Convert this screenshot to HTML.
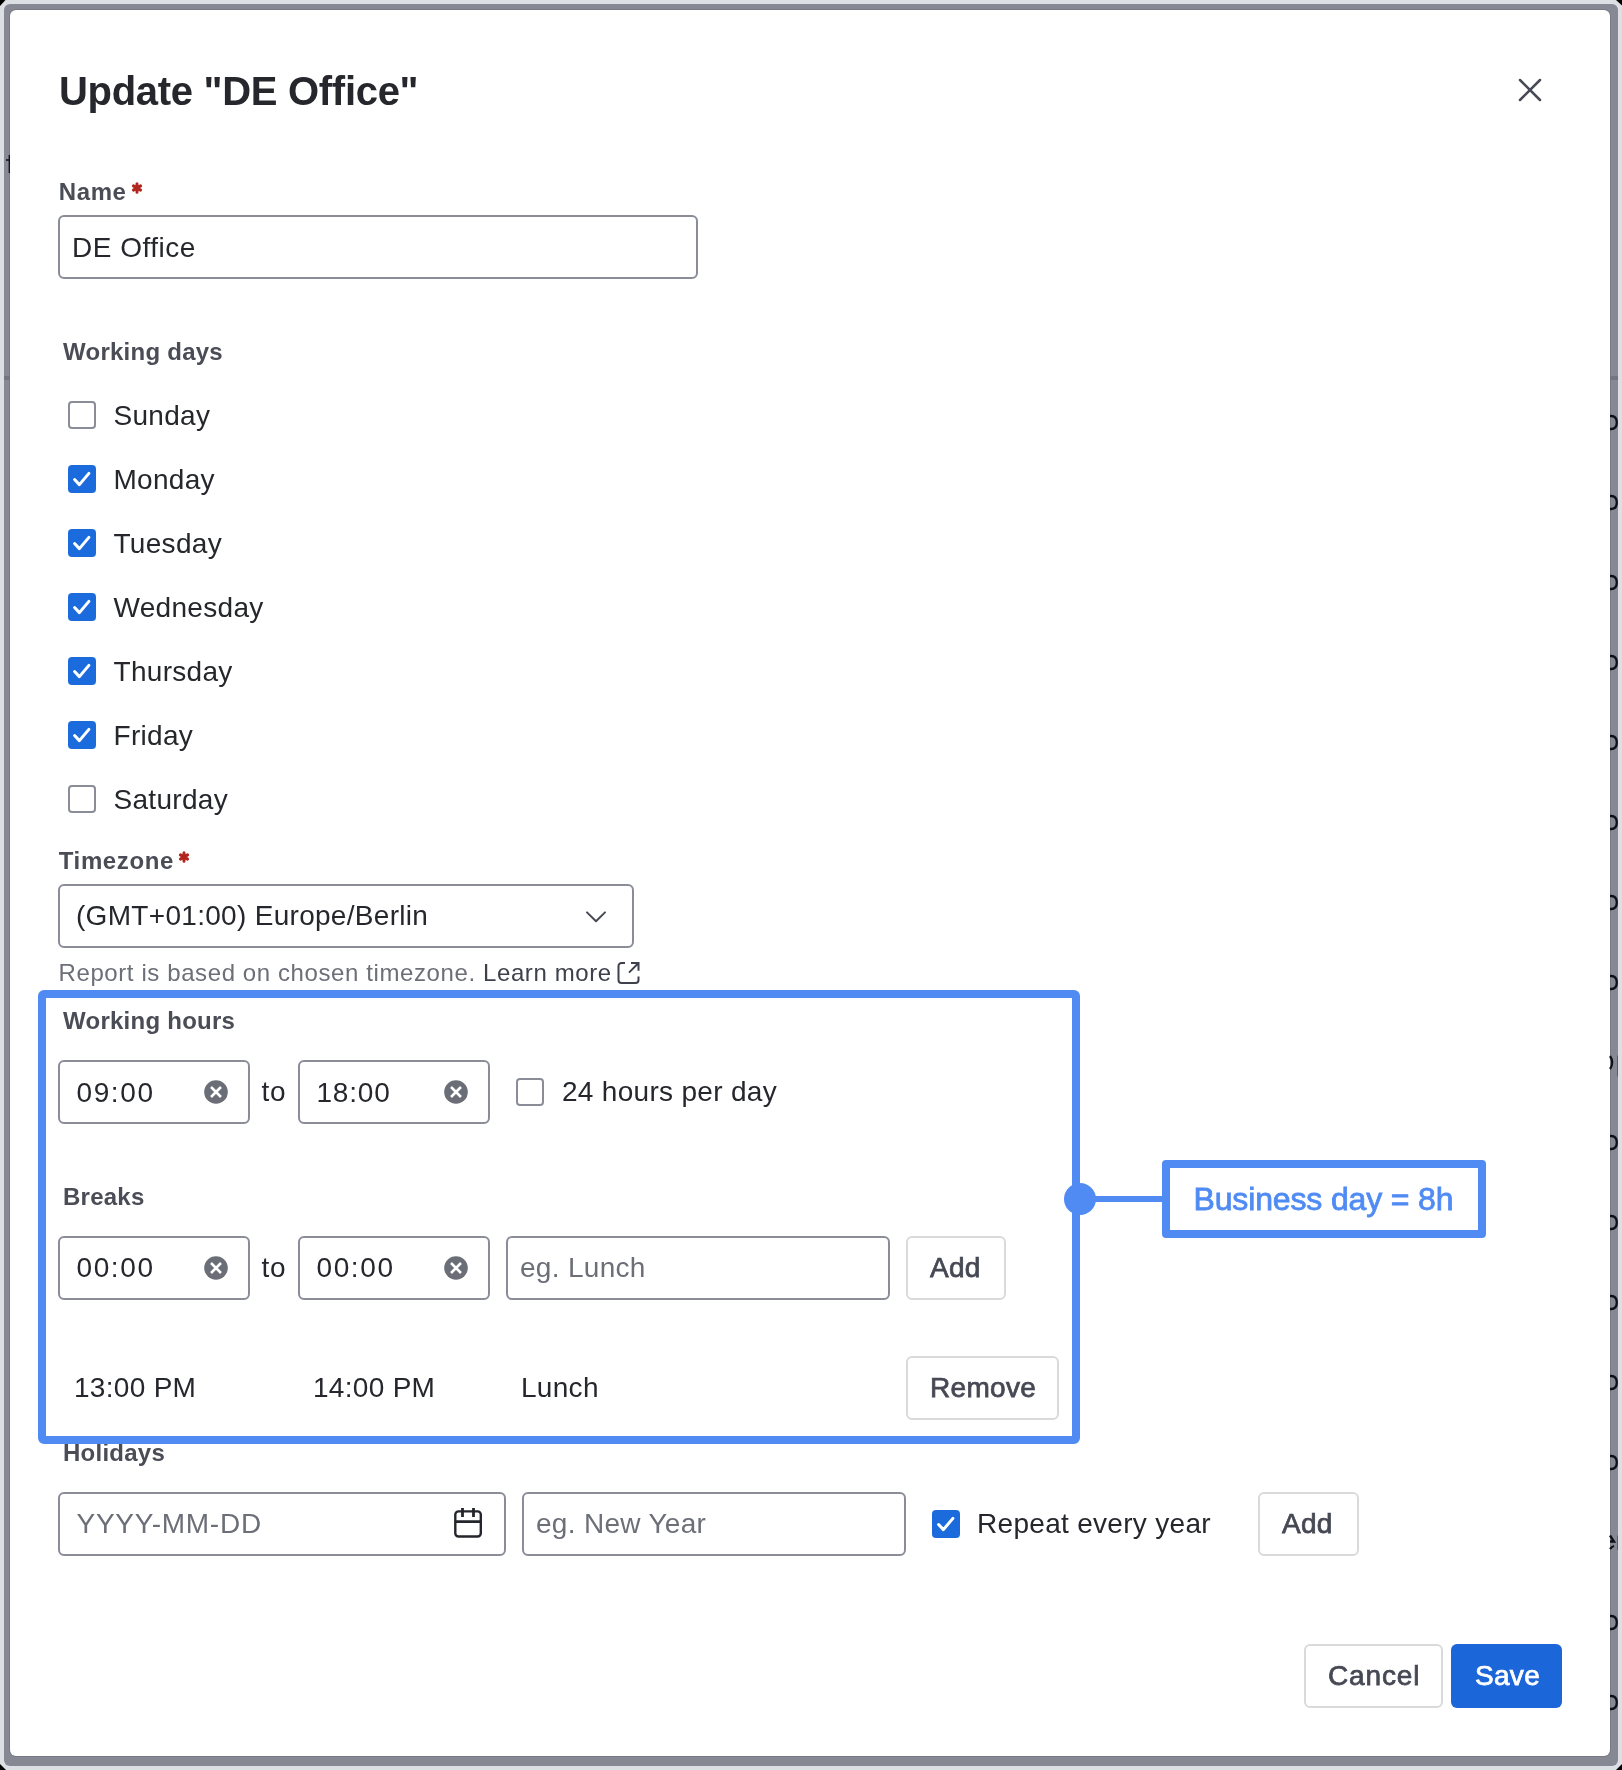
<!DOCTYPE html>
<html><head><meta charset="utf-8">
<style>
html,body{margin:0;padding:0;width:1622px;height:1770px;overflow:hidden;background:#000;}
body{font-family:"Liberation Sans",sans-serif;position:relative;will-change:transform;}
.a{position:absolute;}
.t{position:absolute;line-height:1;white-space:nowrap;}
#bg{left:0;top:0;width:1622px;height:1770px;background:#dcdfe4;clip-path:polygon(5.5px 0,1616px 0,1622px 5.5px,1622px 1764px,1616px 1770px,6px 1770px,0 1764px,0 6px);}
#band{left:4px;top:4px;width:1614px;height:1762px;background:#868993;border-radius:6px;}
#modal{left:10px;top:10px;width:1600px;height:1746px;background:#fff;border-radius:6px;overflow:hidden;box-shadow:0 0 0 1px #777a84;}
.lbl{font-size:24px;font-weight:bold;color:#4a4d56;letter-spacing:0.25px;}
.req{color:#b3261e;}
.txt{font-size:28px;color:#25272c;letter-spacing:0.3px;}
.ph{font-size:28px;color:#6c6f78;letter-spacing:0.3px;}
.box{position:absolute;box-sizing:border-box;border:2px solid #8a8d97;border-radius:6px;background:#fff;}
.btn{position:absolute;box-sizing:border-box;border:2px solid #dadada;border-radius:6px;background:#fff;}
.cb{position:absolute;box-sizing:border-box;width:28px;height:28px;border:2px solid #8a8d97;border-radius:4px;background:#fff;}
.cbc{position:absolute;width:28px;height:28px;border-radius:4px;background:#1b6bdd;}
.bt{font-size:28px;color:#464954;-webkit-text-stroke:0.75px #464954;letter-spacing:0.3px;}
</style></head><body>
<div id="bg" class="a"></div>
<div id="band" class="a"></div>
<div id="modal" class="a"></div>
<svg class="a" style="left:0;top:0" width="1622" height="1770" viewBox="0 0 1622 1770"><path d="M1610 416.0 H1611 Q1616.8 416.0 1616.8 422.5 Q1616.8 429.0 1611 429.0 H1610" fill="none" stroke="#0d0f18" stroke-width="2.3"/><path d="M1610 496.0 H1611 Q1616.8 496.0 1616.8 502.5 Q1616.8 509.0 1611 509.0 H1610" fill="none" stroke="#0d0f18" stroke-width="2.3"/><path d="M1610 576.0 H1611 Q1616.8 576.0 1616.8 582.5 Q1616.8 589.0 1611 589.0 H1610" fill="none" stroke="#0d0f18" stroke-width="2.3"/><path d="M1610 656.0 H1611 Q1616.8 656.0 1616.8 662.5 Q1616.8 669.0 1611 669.0 H1610" fill="none" stroke="#0d0f18" stroke-width="2.3"/><path d="M1610 736.0 H1611 Q1616.8 736.0 1616.8 742.5 Q1616.8 749.0 1611 749.0 H1610" fill="none" stroke="#0d0f18" stroke-width="2.3"/><path d="M1610 816.0 H1611 Q1616.8 816.0 1616.8 822.5 Q1616.8 829.0 1611 829.0 H1610" fill="none" stroke="#0d0f18" stroke-width="2.3"/><path d="M1610 896.0 H1611 Q1616.8 896.0 1616.8 902.5 Q1616.8 909.0 1611 909.0 H1610" fill="none" stroke="#0d0f18" stroke-width="2.3"/><path d="M1610 976.0 H1611 Q1616.8 976.0 1616.8 982.5 Q1616.8 989.0 1611 989.0 H1610" fill="none" stroke="#0d0f18" stroke-width="2.3"/><path d="M1610 1056.0 Q1614.5 1062.5 1610 1069.0" fill="none" stroke="#0d0f18" stroke-width="2.2"/><path d="M1617.5 1055.5 V1076.5" stroke="#5a5d68" stroke-width="1"/><path d="M1610 1136.0 H1611 Q1616.8 1136.0 1616.8 1142.5 Q1616.8 1149.0 1611 1149.0 H1610" fill="none" stroke="#0d0f18" stroke-width="2.3"/><path d="M1610 1216.0 H1611 Q1616.8 1216.0 1616.8 1222.5 Q1616.8 1229.0 1611 1229.0 H1610" fill="none" stroke="#0d0f18" stroke-width="2.3"/><path d="M1610 1296.0 H1611 Q1616.8 1296.0 1616.8 1302.5 Q1616.8 1309.0 1611 1309.0 H1610" fill="none" stroke="#0d0f18" stroke-width="2.3"/><path d="M1610 1376.0 H1611 Q1616.8 1376.0 1616.8 1382.5 Q1616.8 1389.0 1611 1389.0 H1610" fill="none" stroke="#0d0f18" stroke-width="2.3"/><path d="M1610 1456.0 H1611 Q1616.8 1456.0 1616.8 1462.5 Q1616.8 1469.0 1611 1469.0 H1610" fill="none" stroke="#0d0f18" stroke-width="2.3"/><path d="M1610 1535.5 L1614 1541.5 H1610 M1610 1549.0 Q1612 1546.5 1614 1546.0" fill="none" stroke="#0d0f18" stroke-width="2.3"/><path d="M1617.5 1535.5 V1550.0" stroke="#5a5d68" stroke-width="1"/><path d="M1610 1616.0 H1611 Q1616.8 1616.0 1616.8 1622.5 Q1616.8 1629.0 1611 1629.0 H1610" fill="none" stroke="#0d0f18" stroke-width="2.3"/><path d="M1610 1696.0 H1611 Q1616.8 1696.0 1616.8 1702.5 Q1616.8 1709.0 1611 1709.0 H1610" fill="none" stroke="#0d0f18" stroke-width="2.3"/><path d="M9.3 155V173M6 160H9.3" fill="none" stroke="#0d0f18" stroke-width="1.3"/><rect x="4" y="376" width="6" height="4" fill="#737681"/><rect x="1610" y="376" width="8" height="4" fill="#737681"/></svg>

<!-- title -->
<div class="t" style="left:59px;top:71.2px;font-size:40px;font-weight:bold;color:#25272c;letter-spacing:-0.3px;">Update "DE Office"</div>
<svg class="a" style="left:1510px;top:70px" width="40" height="40" viewBox="0 0 40 40"><path d="M10 10L30 30M30 10L10 30" stroke="#474a54" stroke-width="2.5" stroke-linecap="round"/></svg>

<!-- name -->
<div class="t lbl" style="left:58.8px;top:179.9px;letter-spacing:0.6px;">Name</div>
<svg class="a" style="left:131px;top:182px" width="12" height="12" viewBox="0 0 12 12"><path d="M6 1.8V10.2M2.4 3.9L9.6 8.1M9.6 3.9L2.4 8.1" stroke="#b3261e" stroke-width="3" stroke-linecap="round"/></svg>
<div class="box" style="left:58px;top:215px;width:640px;height:64px;"></div>
<div class="t txt" style="left:72px;top:233.6px;letter-spacing:0.5px;">DE Office</div>

<!-- working days -->
<div class="t lbl" style="left:63px;top:340px;">Working days</div>
<div class="cb" style="left:68px;top:401px;"></div>
<div class="t txt" style="left:113.5px;top:401.5px;">Sunday</div>
<div class="cbc" style="left:68px;top:465px;"><svg width="28" height="28" viewBox="0 0 28 28"><path d="M6.6 14.5L11.4 19.6L20.9 8.4" fill="none" stroke="#fff" stroke-width="3" stroke-linecap="round" stroke-linejoin="round"/></svg></div>
<div class="t txt" style="left:113.5px;top:465.5px;">Monday</div>
<div class="cbc" style="left:68px;top:529px;"><svg width="28" height="28" viewBox="0 0 28 28"><path d="M6.6 14.5L11.4 19.6L20.9 8.4" fill="none" stroke="#fff" stroke-width="3" stroke-linecap="round" stroke-linejoin="round"/></svg></div>
<div class="t txt" style="left:113.5px;top:529.5px;">Tuesday</div>
<div class="cbc" style="left:68px;top:593px;"><svg width="28" height="28" viewBox="0 0 28 28"><path d="M6.6 14.5L11.4 19.6L20.9 8.4" fill="none" stroke="#fff" stroke-width="3" stroke-linecap="round" stroke-linejoin="round"/></svg></div>
<div class="t txt" style="left:113.5px;top:593.5px;">Wednesday</div>
<div class="cbc" style="left:68px;top:657px;"><svg width="28" height="28" viewBox="0 0 28 28"><path d="M6.6 14.5L11.4 19.6L20.9 8.4" fill="none" stroke="#fff" stroke-width="3" stroke-linecap="round" stroke-linejoin="round"/></svg></div>
<div class="t txt" style="left:113.5px;top:657.5px;">Thursday</div>
<div class="cbc" style="left:68px;top:721px;"><svg width="28" height="28" viewBox="0 0 28 28"><path d="M6.6 14.5L11.4 19.6L20.9 8.4" fill="none" stroke="#fff" stroke-width="3" stroke-linecap="round" stroke-linejoin="round"/></svg></div>
<div class="t txt" style="left:113.5px;top:721.5px;">Friday</div>
<div class="cb" style="left:68px;top:785px;"></div>
<div class="t txt" style="left:113.5px;top:785.5px;">Saturday</div>

<!-- timezone -->
<div class="t lbl" style="left:58.8px;top:849px;letter-spacing:0.6px;">Timezone</div>
<svg class="a" style="left:177.5px;top:851px" width="12" height="12" viewBox="0 0 12 12"><path d="M6 1.8V10.2M2.4 3.9L9.6 8.1M9.6 3.9L2.4 8.1" stroke="#b3261e" stroke-width="3" stroke-linecap="round"/></svg>
<div class="box" style="left:58px;top:884px;width:576px;height:64px;"></div>
<div class="t txt" style="left:76px;top:901.7px;">(GMT+01:00) Europe/Berlin</div>
<svg class="a" style="left:584px;top:904px" width="24" height="24" viewBox="0 0 24 24"><path d="M3 8.4L12 17.2L21 8.4" fill="none" stroke="#474a54" stroke-width="2" stroke-linecap="round" stroke-linejoin="round"/></svg>
<div class="t" style="left:58.5px;top:960.7px;font-size:24px;color:#6c6f78;letter-spacing:0.6px;">Report is based on chosen timezone. <span style="color:#3e414b">Learn more</span></div>
<svg class="a" style="left:616px;top:960px" width="26" height="26" viewBox="0 0 26 26"><path d="M9 3H5.5A3 3 0 0 0 2.5 6V20A3 3 0 0 0 5.5 23H19.5A3 3 0 0 0 22.5 20V16.5M15 3H22.5V10.8M22.5 3L13 12.6" fill="none" stroke="#3e414b" stroke-width="2"/></svg>

<!-- working hours -->
<div class="t lbl" style="left:63px;top:1008.5px;">Working hours</div>
<div class="box" style="left:58px;top:1060px;width:192px;height:64px;"></div>
<div class="t txt" style="left:76.5px;top:1078.6px;letter-spacing:1.6px;">09:00</div>
<svg class="a" style="left:204px;top:1080px" width="24" height="24" viewBox="0 0 24 24"><circle cx="12" cy="12" r="11.8" fill="#6b6e77"/><path d="M7 7L17 17M17 7L7 17" stroke="#fff" stroke-width="2.6"/></svg>
<div class="t txt" style="left:261.5px;top:1078.4px;letter-spacing:0.8px;">to</div>
<div class="box" style="left:298px;top:1060px;width:192px;height:64px;"></div>
<div class="t txt" style="left:316.5px;top:1078.6px;letter-spacing:0.8px;">18:00</div>
<svg class="a" style="left:444px;top:1080px" width="24" height="24" viewBox="0 0 24 24"><circle cx="12" cy="12" r="11.8" fill="#6b6e77"/><path d="M7 7L17 17M17 7L7 17" stroke="#fff" stroke-width="2.6"/></svg>
<div class="cb" style="left:516px;top:1078px;"></div>
<div class="t txt" style="left:562px;top:1077.9px;">24 hours per day</div>

<!-- breaks -->
<div class="t lbl" style="left:63px;top:1185.2px;">Breaks</div>
<div class="box" style="left:58px;top:1236px;width:192px;height:64px;"></div>
<div class="t txt" style="left:76.5px;top:1253.8px;letter-spacing:1.6px;">00:00</div>
<svg class="a" style="left:204px;top:1256px" width="24" height="24" viewBox="0 0 24 24"><circle cx="12" cy="12" r="11.8" fill="#6b6e77"/><path d="M7 7L17 17M17 7L7 17" stroke="#fff" stroke-width="2.6"/></svg>
<div class="t txt" style="left:261.5px;top:1253.6px;letter-spacing:0.8px;">to</div>
<div class="box" style="left:298px;top:1236px;width:192px;height:64px;"></div>
<div class="t txt" style="left:316.5px;top:1253.8px;letter-spacing:1.6px;">00:00</div>
<svg class="a" style="left:444px;top:1256px" width="24" height="24" viewBox="0 0 24 24"><circle cx="12" cy="12" r="11.8" fill="#6b6e77"/><path d="M7 7L17 17M17 7L7 17" stroke="#fff" stroke-width="2.6"/></svg>
<div class="box" style="left:506px;top:1236px;width:384px;height:64px;"></div>
<div class="t ph" style="left:520px;top:1253.8px;">eg. Lunch</div>
<div class="btn" style="left:906px;top:1236px;width:100px;height:64px;"></div>
<div class="t bt" style="left:930px;top:1253.8px;">Add</div>

<div class="t txt" style="left:74px;top:1373.6px;">13:00 PM</div>
<div class="t txt" style="left:313px;top:1373.6px;">14:00 PM</div>
<div class="t txt" style="left:521px;top:1373.6px;">Lunch</div>
<div class="btn" style="left:906px;top:1356px;width:153px;height:64px;"></div>
<div class="t bt" style="left:930px;top:1374.3px;">Remove</div>

<!-- holidays -->
<div class="t lbl" style="left:63px;top:1440.7px;">Holidays</div>
<div class="box" style="left:58px;top:1492px;width:448px;height:64px;"></div>
<div class="t ph" style="left:76.5px;top:1509.9px;letter-spacing:0.75px;">YYYY-MM-DD</div>
<svg class="a" style="left:452px;top:1506px" width="32" height="34" viewBox="0 0 32 34"><rect x="3.3" y="5.4" width="25.5" height="25.1" rx="3.2" fill="none" stroke="#24262b" stroke-width="2.4"/><path d="M3.3 15.6H28.8M10.5 2V11M21.5 2V11" stroke="#24262b" stroke-width="2.8"/></svg>
<div class="box" style="left:522px;top:1492px;width:384px;height:64px;"></div>
<div class="t ph" style="left:536px;top:1509.9px;">eg. New Year</div>
<div class="cbc" style="left:932px;top:1510px;"><svg width="28" height="28" viewBox="0 0 28 28"><path d="M6.6 14.5L11.4 19.6L20.9 8.4" fill="none" stroke="#fff" stroke-width="3" stroke-linecap="round" stroke-linejoin="round"/></svg></div>
<div class="t txt" style="left:977px;top:1509.9px;">Repeat every year</div>
<div class="btn" style="left:1258px;top:1492px;width:101px;height:64px;"></div>
<div class="t bt" style="left:1282px;top:1509.9px;">Add</div>

<!-- footer -->
<div class="btn" style="left:1304px;top:1644px;width:139px;height:64px;"></div>
<div class="t bt" style="left:1328px;top:1662.1px;letter-spacing:0.85px;">Cancel</div>
<div class="a" style="left:1451px;top:1644px;width:111px;height:64px;background:#1b66d9;border-radius:6px;"></div>
<div class="t bt" style="left:1475px;top:1662.1px;color:#fff;-webkit-text-stroke:0.75px #fff;">Save</div>

<!-- highlight -->
<div class="a" style="left:38px;top:990px;width:1042px;height:454px;box-sizing:border-box;border:8px solid #508bf4;border-radius:6px 6px 6px 6px;"></div>
<div class="a" style="left:1080px;top:1196px;width:84px;height:6px;background:#508bf4;"></div>
<div class="a" style="left:1064px;top:1183px;width:32px;height:32px;border-radius:50%;background:#508bf4;"></div>
<div class="a" style="left:1162px;top:1160px;width:324px;height:78px;box-sizing:border-box;border:8px solid #508bf4;border-radius:4px;"></div>
<div class="t" style="left:1193.5px;top:1182.6px;font-size:32px;color:#508bf4;-webkit-text-stroke:0.8px #508bf4;letter-spacing:-0.15px;">Business day = 8h</div>

</body></html>
